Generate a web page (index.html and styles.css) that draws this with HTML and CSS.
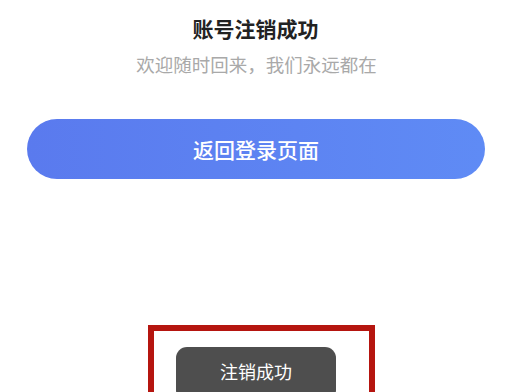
FILE: index.html
```html
<!DOCTYPE html>
<html lang="zh-CN">
<head>
    <meta charset="UTF-8">
    <meta name="viewport" content="width=device-width, initial-scale=1.0">
    <title>账号注销成功</title>
    <link rel="stylesheet" href="styles.css">
</head>
<body>
    <div class="page">
        <h1 class="title">账号注销成功</h1>
        <p class="subtitle">欢迎随时回来，我们永远都在</p>
        <button class="back-btn">返回登录页面</button>
        <div class="mark-box">
            <div class="toast">注销成功</div>
        </div>
    </div>
</body>
</html>
```

FILE: styles.css
```css
* {
    margin: 0;
    padding: 0;
    box-sizing: border-box;
}
body {
    font-family: "Noto Sans CJK SC", "Noto Sans", sans-serif;
    background: #fff;
    height: 100vh;
    overflow: hidden;
}
.page {
    display: flex;
    flex-direction: column;
    align-items: center;
    padding-top: 14px;
}
.title {
    font-size: 21px;
    line-height: 28px;
    font-weight: 700;
    color: #222;
    margin-left: 6px;
}
.subtitle {
    margin-top: 10px;
    font-size: 18.5px;
    line-height: 24px;
    color: #a9a9a9;
    margin-left: 8px;
}
.back-btn {
    align-self: stretch;
    margin: 43px 20px 0 27px;
    height: 60px;
    border: none;
    border-radius: 30px;
    background: linear-gradient(to right, #5a7aee, #5f8bf5);
    color: #fff;
    font-family: inherit;
    font-size: 21px;
    font-weight: 500;
}
.mark-box {
    align-self: flex-start;
    margin: 146px 0 0 148px;
    width: 227px;
    height: 67px;
    border: 6px solid #b5150f;
    border-bottom: none;
    padding: 16px 0 0 22px;
    overflow: hidden;
}
.toast {
    width: 160px;
    height: 54px;
    padding-top: 10px;
    border-radius: 11px;
    background: #4e4e4e;
    color: #fff;
    font-size: 18px;
    line-height: 28px;
    text-align: center;
}
```
